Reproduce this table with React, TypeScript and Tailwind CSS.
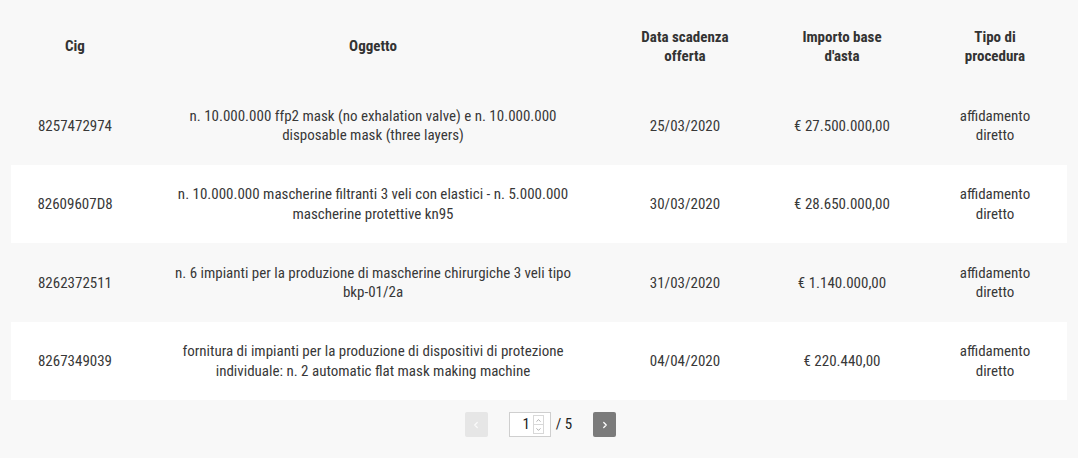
import { ChevronLeft, ChevronRight, ChevronUp, ChevronDown } from 'lucide-react'

interface Gara {
  cig: string
  oggetto: string
  scadenza: string
  importo: string
  tipo: string
}

const gare: Gara[] = [
  {
    cig: '8257472974',
    oggetto: 'n. 10.000.000 ffp2 mask (no exhalation valve) e n. 10.000.000 disposable mask (three layers)',
    scadenza: '25/03/2020',
    importo: '€ 27.500.000,00',
    tipo: 'affidamento diretto',
  },
  {
    cig: '82609607D8',
    oggetto: 'n. 10.000.000 mascherine filtranti 3 veli con elastici - n. 5.000.000 mascherine protettive kn95',
    scadenza: '30/03/2020',
    importo: '€ 28.650.000,00',
    tipo: 'affidamento diretto',
  },
  {
    cig: '8262372511',
    oggetto: 'n. 6 impianti per la produzione di mascherine chirurgiche 3 veli tipo bkp-01/2a',
    scadenza: '31/03/2020',
    importo: '€ 1.140.000,00',
    tipo: 'affidamento diretto',
  },
  {
    cig: '8267349039',
    oggetto: 'fornitura di impianti per la produzione di dispositivi di protezione individuale: n. 2 automatic flat mask making machine',
    scadenza: '04/04/2020',
    importo: '€ 220.440,00',
    tipo: 'affidamento diretto',
  },
]

const cols = 'grid grid-cols-[128px_468px_156px_158px_148px]'

export default function App() {
  return (
    <div
      className="min-h-[458px] w-[1078px] bg-[#f8f8f8] px-[11px] text-[15px] leading-[19.5px] text-[#383838]"
      style={{ fontFamily: '"Roboto Condensed", "Liberation Sans Narrow", Roboto, sans-serif' }}
    >
      {/* header */}
      <div className={`${cols} h-[86px] items-center pt-[8px] text-center font-bold text-[#333]`}>
        <div className="px-6">Cig</div>
        <div className="px-6">Oggetto</div>
        <div className="px-6">Data scadenza offerta</div>
        <div className="px-8">Importo base d'asta</div>
        <div className="px-9">Tipo di procedura</div>
      </div>

      {/* rows */}
      {gare.map((g, i) => (
        <div
          key={g.cig}
          className={`${cols} h-[78.5px] items-center pt-[2px] text-center ${i % 2 === 1 ? 'bg-white' : ''}`}
        >
          <div className="px-6">{g.cig}</div>
          <div className="px-6">{g.oggetto}</div>
          <div className="px-6">{g.scadenza}</div>
          <div className="px-6">{g.importo}</div>
          <div className="px-9">{g.tipo}</div>
        </div>
      ))}

      {/* pagination */}
      <div className="flex items-center justify-center pl-[3px] pt-[12px]">
        <button className="flex h-[25px] w-[23px] items-center justify-center rounded-[2px] bg-[#e6e6e6] text-[#fafafa]">
          <ChevronLeft size={10} strokeWidth={3} />
        </button>
        <div className="ml-[21px] flex h-[25px] w-[42px] items-center border border-[#cfcfcf] bg-white">
          <span className="flex-1 pr-[3px] text-right text-[15px] text-[#222]">1</span>
          <div className="mr-[6px] flex h-[19px] w-[11px] flex-col border border-[#d8d8d8]">
            <div className="flex flex-1 items-center justify-center border-b border-[#d8d8d8] text-[#777]">
              <ChevronUp size={7} strokeWidth={2} />
            </div>
            <div className="flex flex-1 items-center justify-center text-[#777]">
              <ChevronDown size={7} strokeWidth={2} />
            </div>
          </div>
        </div>
        <span className="ml-[5px] text-[15px] text-[#222]">/ 5</span>
        <button className="ml-[21px] flex h-[25px] w-[23px] items-center justify-center rounded-[2px] bg-[#7b7b7b] text-white">
          <ChevronRight size={10} strokeWidth={3} />
        </button>
      </div>
    </div>
  )
}
